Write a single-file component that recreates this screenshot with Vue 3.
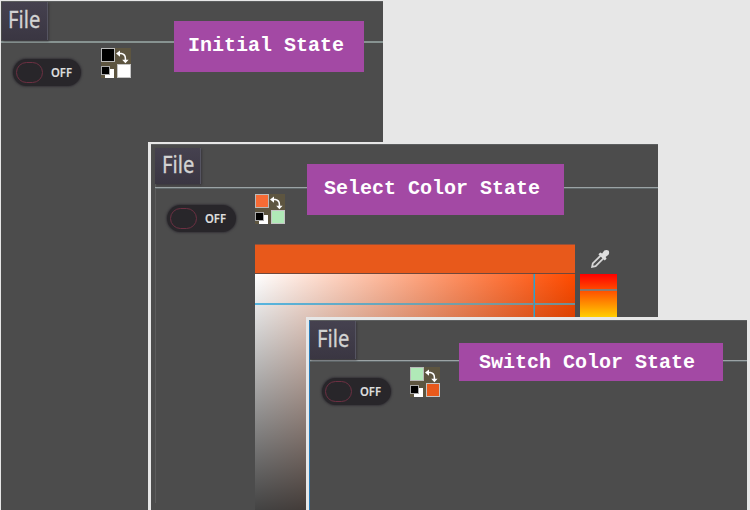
<script setup>
const windows = [
  { id: 'initial', label: 'Initial State', fg: '#000000', bg: '#ffffff', picker: false },
  { id: 'select', label: 'Select Color State', fg: '#f76b35', bg: '#b0e9b7', picker: true },
  { id: 'switch', label: 'Switch Color State', fg: '#b0e9b7', bg: '#e8591b', picker: false },
]
</script>

<template>
  <main class="desktop">
    <section v-for="w in windows" :key="w.id" class="window" :class="w.id">
      <header class="menubar">
        <button class="file"><span>File</span></button>
      </header>
      <div class="toolbar">
        <div class="toggle">
          <span class="knob"></span>
          <span class="state">OFF</span>
        </div>
        <svg class="swatches" width="30" height="30" viewBox="0 0 30 30">
          <rect width="30" height="30" fill="#5d5540" />
          <rect x="0.5" y="0.5" width="13" height="13" :fill="w.fg" stroke="#b9b9b9" />
          <rect x="16.5" y="16.5" width="13" height="13" :fill="w.bg" stroke="#c4c4c4" />
          <rect x="4" y="21" width="9" height="9" fill="#fff" />
          <rect x="0.5" y="18.5" width="8" height="8" fill="#000" stroke="#a9a9a9" />
          <path d="M18 5.6H20.4Q24.4 6.4 24.4 10.5V12" fill="none" stroke="#fff" stroke-width="1.5" />
          <path d="M15 5.6L19 2.4V8.8ZM24.4 15.2L21.2 11.8H27.6Z" fill="#fff" />
        </svg>
      </div>
      <div v-if="w.picker" class="picker">
        <div class="main-column">
          <div class="current"></div>
          <div class="field">
            <i class="cross-x"></i>
            <i class="cross-y"></i>
          </div>
        </div>
        <div class="side-column">
          <svg class="dropper" width="20" height="20" viewBox="0 0 20 20">
            <path d="M2.1 17.9L2.8 14.4L11.2 6L14 8.8L5.6 17.2Z" fill="none" stroke="#d6d6d6" stroke-width="1.8" />
            <path d="M8.4 5.3L10.3 3.4L12.1 4.4L14.3 1.6Q16.4.2 18.5 1.6Q19.8 3.6 18.5 5.8L15.6 8L16.6 9.7L14.7 11.6Z" fill="#dedede" />
          </svg>
          <div class="hue"><i></i></div>
        </div>
      </div>
      <div class="label">{{ w.label }}</div>
    </section>
  </main>
</template>

<style>
body {
  margin: 0;
  overflow: hidden;
}
</style>

<style scoped>
.desktop {
  position: relative;
  width: 750px;
  height: 510px;
  overflow: hidden;
  background: #e7e7e7;
}
.window {
  position: absolute;
  bottom: 0;
  box-sizing: border-box;
  overflow: hidden;
  background: #4c4c4c;
  border-top: 1px solid #5d5f60;
}
.initial {
  left: 1px;
  top: 1px;
  width: 382px;
}
.select {
  left: 151px;
  top: 144px;
  width: 507px;
  padding-left: 4px;
  background: linear-gradient(#5c5c5c, #5c5c5c) 4px 3px / 1px 355px no-repeat #4c4c4c;
}
.switch {
  left: 309px;
  top: 320px;
  width: 438px;
  border-left: 1px solid #287cba;
}
/* light frames that separate stacked windows */
.select {
  box-shadow: -3px 0 0 #e7e7e7, -3px -2px 0 #e7e7e7, 0 -2px 0 #e7e7e7;
}
.switch {
  box-shadow: -3px 0 0 #e7e7e7, -3px -3px 0 #e7e7e7, 0 -3px 0 #e7e7e7;
}
.menubar {
  box-sizing: border-box;
  height: 41px;
  border-bottom: 2px solid #879391;
}
.select .menubar {
  height: 43px;
  padding-top: 3px;
  border-bottom: 1px solid #9ba3a5;
  box-shadow: 0 1px 0 #60686a;
}
.switch .menubar {
  height: 40px;
  border-bottom: 1px solid #9ba3a5;
  box-shadow: 0 1px 0 #60686a;
}
.file {
  display: flex;
  align-items: flex-start;
  box-sizing: border-box;
  width: 46px;
  height: 38px;
  margin: 0;
  padding: 0 0 0 7px;
  border: 0;
  border-right: 1px solid #555461;
  background: linear-gradient(#45414f, #3a3642);
  box-shadow: 1px 1px 2px #38363b;
  color: #d2d2d2;
  font: 23px/34px "Noto Sans", sans-serif;
  text-align: left;
}
.select .file {
  height: 36px;
  line-height: 33px;
}
.initial .file {
  margin-left: 1px;
  padding-left: 6px;
}
.file span {
  display: inline-block;
  transform: scaleX(0.88);
  transform-origin: left;
  -webkit-text-stroke: 0.3px #d2d2d2;
}
.toolbar {
  display: flex;
  align-items: flex-start;
  gap: 19px;
  padding: 5px 0 0 12px;
}
.select .toolbar,
.switch .toolbar {
  padding-top: 6px;
}
.toggle {
  display: flex;
  align-items: center;
  box-sizing: border-box;
  width: 69px;
  height: 27px;
  margin-top: 11px;
  padding-left: 3px;
  border-radius: 14px;
  background: #28262a;
  box-shadow: 0 0 2px 1px #353338;
}
.initial .toggle {
  width: 68px;
}
.knob {
  box-sizing: border-box;
  width: 27px;
  height: 21px;
  border: 1px solid #6c3042;
  border-radius: 11px;
}
.state {
  margin-left: 8px;
  color: #dedede;
  font: 600 12.5px/27px "Noto Sans", sans-serif;
  transform: scaleX(0.9);
  transform-origin: left;
  -webkit-text-stroke: 0.2px #dedede;
}
.swatches {
  display: block;
  flex: none;
}
.initial .swatches {
  margin-left: 1px;
}
.picker {
  display: flex;
  gap: 5px;
  margin: 12px 0 0 100px;
}
.main-column {
  width: 320px;
}
.current {
  box-sizing: border-box;
  height: 30px;
  background: #e8591b;
  border-top: 1px solid #965038;
  border-bottom: 1px solid #70483c;
}
.field {
  position: relative;
  height: 320px;
  background: linear-gradient(transparent, #000), linear-gradient(to right, #fff, #ff4b00);
}
.cross-x,
.cross-y {
  position: absolute;
}
.cross-x {
  left: 0;
  right: 0;
  top: 29px;
  height: 2px;
  background: linear-gradient(to right, #55b4df, #789ba0 70%, #708f94);
}
.cross-y {
  top: 0;
  bottom: 0;
  left: 279px;
  width: 1px;
  background: #2ba2cc;
  box-shadow: -1px 0 0 #907f78;
}
.side-column {
  width: 37px;
}
.dropper {
  display: block;
  margin: 5px 0 5px 10px;
}
.hue {
  height: 320px;
  padding-top: 15px;
  box-sizing: border-box;
  background: linear-gradient(#f00, #ff0 16.667%, #0f0 33.333%, #0ff 50%, #00f 66.667%, #f0f 83.333%, #f00);
}
.hue i {
  display: block;
  height: 2px;
  background: #897a70;
}
.label {
  position: absolute;
  display: flex;
  align-items: center;
  box-sizing: border-box;
  padding-left: 14px;
  background: #a349a4;
  color: #fff;
  font: bold 20px/24px "Liberation Mono", monospace;
  white-space: pre;
}
.initial .label {
  left: 173px;
  top: 19px;
  width: 190px;
  height: 51px;
  padding-bottom: 1px;
}
.select .label {
  left: 156px;
  top: 19px;
  width: 257px;
  height: 51px;
  padding-left: 17px;
  padding-bottom: 2px;
}
.switch .label {
  left: 149px;
  top: 22px;
  width: 264px;
  height: 38px;
  padding: 1px 0 0 20px;
}
</style>
